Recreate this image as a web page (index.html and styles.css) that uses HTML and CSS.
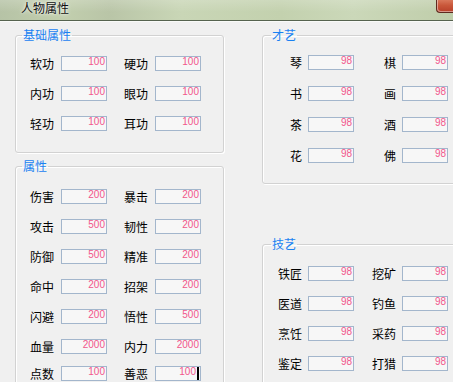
FILE: index.html
```html
<!DOCTYPE html>
<html lang="zh-CN">
<head>
  <meta charset="UTF-8" />
  <title>人物属性</title>
  <link rel="stylesheet" href="styles.css">
</head>
<body>
  <div class="window">
    <header class="titlebar">
      <span class="title">人物属性</span>
      <span class="close" aria-label="关闭"></span>
    </header>

    <main class="client">
      <div class="col col-left">
        <fieldset class="group group-basic">
          <legend>基础属性</legend>
          <div class="row">
            <div class="field"><span class="label">软功</span><span class="val">100</span></div>
            <div class="field"><span class="label">硬功</span><span class="val">100</span></div>
          </div>
          <div class="row">
            <div class="field"><span class="label">内功</span><span class="val">100</span></div>
            <div class="field"><span class="label">眼功</span><span class="val">100</span></div>
          </div>
          <div class="row">
            <div class="field"><span class="label">轻功</span><span class="val">100</span></div>
            <div class="field"><span class="label">耳功</span><span class="val">100</span></div>
          </div>
        </fieldset>

        <fieldset class="group group-attr">
          <legend>属性</legend>
          <div class="row">
            <div class="field"><span class="label">伤害</span><span class="val">200</span></div>
            <div class="field"><span class="label">暴击</span><span class="val">200</span></div>
          </div>
          <div class="row">
            <div class="field"><span class="label">攻击</span><span class="val">500</span></div>
            <div class="field"><span class="label">韧性</span><span class="val">200</span></div>
          </div>
          <div class="row">
            <div class="field"><span class="label">防御</span><span class="val">500</span></div>
            <div class="field"><span class="label">精准</span><span class="val">200</span></div>
          </div>
          <div class="row">
            <div class="field"><span class="label">命中</span><span class="val">200</span></div>
            <div class="field"><span class="label">招架</span><span class="val">200</span></div>
          </div>
          <div class="row">
            <div class="field"><span class="label">闪避</span><span class="val">200</span></div>
            <div class="field"><span class="label">悟性</span><span class="val">500</span></div>
          </div>
          <div class="row">
            <div class="field"><span class="label">血量</span><span class="val">2000</span></div>
            <div class="field"><span class="label">内力</span><span class="val">2000</span></div>
          </div>
          <div class="row">
            <div class="field"><span class="label">点数</span><span class="val">100</span></div>
            <div class="field"><span class="label">善恶</span><span class="val focus">100<span class="caret"></span></span></div>
          </div>
        </fieldset>
      </div>

      <div class="col col-right">
        <fieldset class="group group-art">
          <legend>才艺</legend>
          <div class="row">
            <div class="field"><span class="label">琴</span><span class="val">98</span></div>
            <div class="field"><span class="label">棋</span><span class="val">98</span></div>
          </div>
          <div class="row">
            <div class="field"><span class="label">书</span><span class="val">98</span></div>
            <div class="field"><span class="label">画</span><span class="val">98</span></div>
          </div>
          <div class="row">
            <div class="field"><span class="label">茶</span><span class="val">98</span></div>
            <div class="field"><span class="label">酒</span><span class="val">98</span></div>
          </div>
          <div class="row">
            <div class="field"><span class="label">花</span><span class="val">98</span></div>
            <div class="field"><span class="label">佛</span><span class="val">98</span></div>
          </div>
        </fieldset>

        <fieldset class="group group-skill">
          <legend>技艺</legend>
          <div class="row">
            <div class="field"><span class="label">铁匠</span><span class="val">98</span></div>
            <div class="field"><span class="label">挖矿</span><span class="val">98</span></div>
          </div>
          <div class="row">
            <div class="field"><span class="label">医道</span><span class="val">98</span></div>
            <div class="field"><span class="label">钓鱼</span><span class="val">98</span></div>
          </div>
          <div class="row">
            <div class="field"><span class="label">烹饪</span><span class="val">98</span></div>
            <div class="field"><span class="label">采药</span><span class="val">98</span></div>
          </div>
          <div class="row">
            <div class="field"><span class="label">鉴定</span><span class="val">98</span></div>
            <div class="field"><span class="label">打猎</span><span class="val">98</span></div>
          </div>
        </fieldset>
      </div>
    </main>
  </div>
</body>
</html>
```

FILE: styles.css
```css
:root {
  --color-bg: #f0f0f0;
  --color-group: #d2d2d2;
  --color-legend: #1a82f2;
  --color-value: #f2568b;
  --color-edit-border: #a3b6cc;
  --color-edit-bg: #f7f7f7;
  --font-ui: "Noto Sans CJK SC", "Noto Sans", sans-serif;
  --font-num: "Liberation Sans", Arial, sans-serif;
}

* {
  box-sizing: border-box;
}
body {
  margin: 0;
  background: var(--color-bg);
  font-family: var(--font-ui);
  color: #000;
  overflow: hidden;
}

.window {
  width: 453px;
  height: 382px;
  overflow: hidden;
}

/* aero title bar */
.titlebar {
  height: 21px;
  display: flex;
  align-items: flex-start;
  border-bottom: 1px solid #56634f;
  background:
    linear-gradient(180deg, rgba(255,255,255,0.18), rgba(255,255,255,0) 60%),
    linear-gradient(90deg, #b6c3a6 0%, #c2cfae 14%, #b9c5a7 24%, #c9d6b6 40%, #c3d1ae 62%, #cbd8b9 78%, #bfcdaa 100%);
}
.title {
  font-size: 12px;
  line-height: 14px;
  padding: 1px 0 0 21px;
  color: #111;
  text-shadow: 0 0 4px rgba(255,255,255,0.9), 0 0 2px rgba(255,255,255,0.8);
}
.close {
  margin-left: auto;
  width: 17px;
  height: 13px;
  border: 1px solid #5e2a1f;
  border-top: 0;
  border-right: 0;
  border-bottom-left-radius: 4px;
  background: linear-gradient(180deg, #d9775a 0%, #c9573a 45%, #b8402a 100%);
  box-shadow: inset 1px -1px 0 rgba(255,255,255,0.45);
}

.client {
  display: flex;
  gap: 38px;
  padding: 6px 0 0 15px;
  border-top: 1px solid #f9faf8;
}

.col {
  display: flex;
  flex-direction: column;
  flex: none;
}
.col-left {
  width: 209px;
}
.col-right {
  width: 210px;
}

.group {
  margin: 0;
  min-width: 0;
  border: 1px solid var(--color-group);
  border-radius: 3px;
  box-shadow: inset 1px 1px 0 #fff, 1px 1px 0 #fff;
  display: flex;
  flex-direction: column;
  gap: 15px;
}
.group legend {
  font-size: 12px;
  line-height: 14px;
  color: var(--color-legend);
  padding: 0 1px;
}

.group-basic {
  padding: 14px 0 21px 14px;
}
.group-attr {
  margin-top: 6px;
  padding: 16px 0 40px 14px;
}
.group-basic legend,
.group-attr legend {
  margin-left: -8px;
}
.group-attr .row:last-child {
  margin-top: -3px;
}

.group-art {
  padding: 13px 0 20px 0;
  gap: 16px;
}
.group-skill {
  margin-top: 53px;
  padding: 15px 0 40px 0;
}
.group-art legend,
.group-skill legend {
  margin-left: 8px;
}

.row {
  display: flex;
  height: 15px;
}

.field {
  display: flex;
  align-items: center;
}
.label {
  flex: none;
  font-size: 12px;
  line-height: 15px;
  white-space: nowrap;
}

.col-left .row {
  gap: 17px;
}
.col-left .label {
  width: 31px;
}

.col-right .row {
  gap: 3px;
}
.col-right .label {
  width: 39px;
  text-align: right;
  margin-right: 6px;
}

.val {
  flex: none;
  width: 46px;
  height: 15px;
  border: 1px solid var(--color-edit-border);
  background: var(--color-edit-bg);
  color: var(--color-value);
  font-family: var(--font-num);
  font-size: 10px;
  line-height: 9px;
  text-align: right;
  padding: 0 1px 0 0;
  overflow: hidden;
}
.caret {
  display: inline-block;
  width: 2px;
  height: 13px;
  margin-left: 1px;
  background: #000;
  vertical-align: top;
}
```
